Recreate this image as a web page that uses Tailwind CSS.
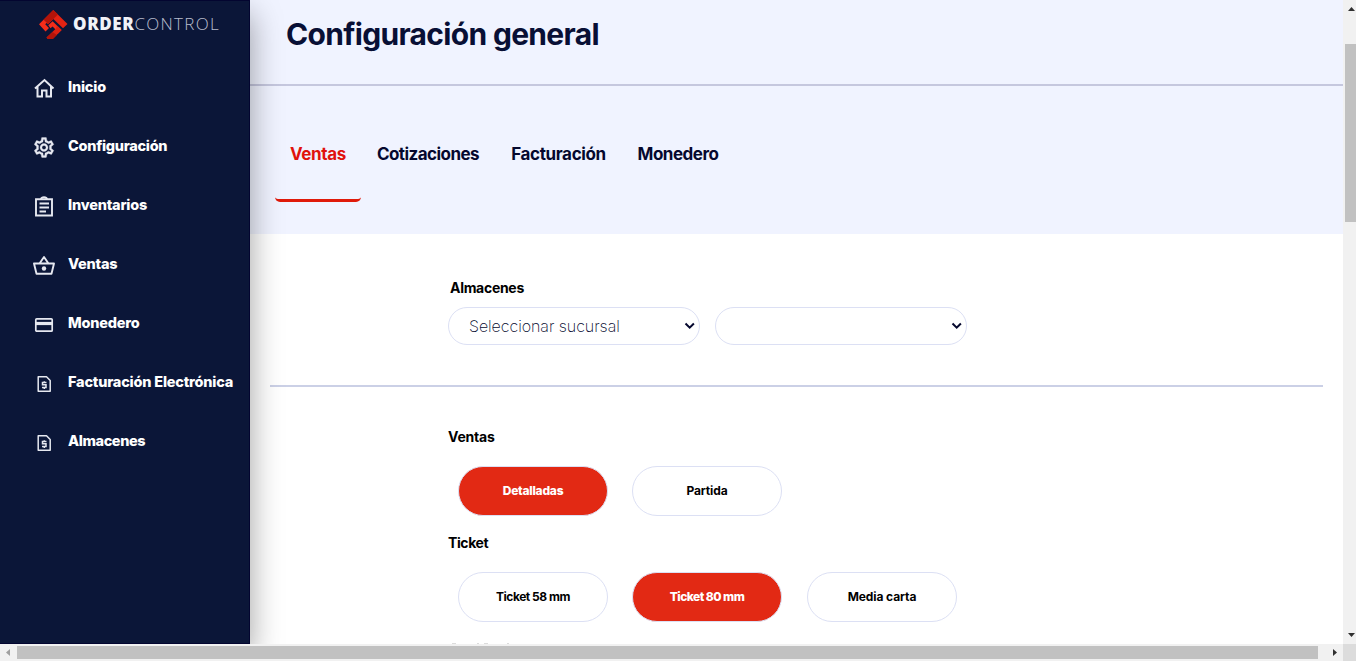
<!DOCTYPE html>
<html lang="es">
<head>
<meta charset="utf-8">
<title>Configuración general</title>
<script src="https://cdn.jsdelivr.net/npm/@tailwindcss/browser@4"></script>
</head>
<body class="h-[661px] w-[1356px] overflow-hidden bg-white font-['Inter',sans-serif] text-black">
<div class="flex h-[661px] flex-col">
  <div class="flex h-[644px]">
    <aside class="relative z-10 flex w-[250px] shrink-0 flex-col border-t border-r border-b border-[#030530] bg-[#0b1638] shadow-[0_14px_30px_0_rgba(0,0,0,0.38)]">
      <div class="flex h-[56px] shrink-0 items-start pt-[9px] pl-[39px]">
        <svg class="h-[30px] w-[29px]" viewBox="0 0 29 30">
          <path d="M14.300 0 L28.500 14 L24 18.300 L14.300 9 L9 14.300 L4.500 9.800 Z" fill="#e32313"/>
          <path d="M14.300 0 L19 4.600 L10 13.300 L9 14.300 L4.500 9.800 Z" fill="#b3140a"/>
          <path d="M4.500 9.800 L0 14.300 L6.500 21.500 L10 18 L6.200 14.300 L7.800 12.700 Z" fill="#f42d1a"/>
          <path d="M9.300 15.300 L13.600 11.200 L22.600 20 L18.500 24 L16 21.500 L17 20 L13.600 16.500 L11.500 18.300 Z" fill="#f42d1a"/>
          <path d="M18.300 15.800 L22.600 20 L13.800 29 H8.800 L7.500 27.500 L16.700 18.800 Z" fill="#dc2011"/>
          <path d="M13.500 22 L17.800 25 L13.800 29 H8.800 L7.500 27.500 Z" fill="#b3140a"/>
        </svg>
        <div class="ml-[5px] flex h-[27px] items-center font-['Open_Sans',sans-serif] text-[17px] leading-none text-[#f1f2f8]"><span class="font-extrabold tracking-[0.6px]">ORDER</span><span class="font-light tracking-[1.300px] text-[#b9bdcd]">CONTROL</span></div>
      </div>
      <nav class="flex flex-col text-[14.5px] font-extrabold tracking-[-0.2px] text-white">
        <a class="flex h-[59px] items-center gap-[13px] pl-[34px]"><svg class="mt-[3px] size-[21px]" viewBox="0.500 0 21 21" fill="none" stroke="#e6e8f0" stroke-width="2"><path d="M1.500 10.500 L11 2 L20 10.500 M4 8.500 V18.500 H8.500 V12.500 H13 V18.500 H17.500 V8.500"/></svg>Inicio</a>
        <a class="flex h-[59px] items-center gap-[13px] pl-[34px] tracking-[-0.280px]"><svg class="mt-[3px] size-[21px]" viewBox="2 1.500 21 21" fill="#e6e8f0" stroke="#e6e8f0" stroke-width=".3"><path d="M19.430 12.980c.04-.32.070-.64.070-.98s-.03-.66-.07-.98l2.110-1.650c.19-.15.240-.42.120-.64l-2-3.460c-.12-.22-.39-.3-.61-.22l-2.490 1c-.52-.4-1.080-.73-1.690-.98l-.38-2.650C14.460 2.180 14.250 2 14 2h-4c-.25 0-.46.18-.49.42l-.38 2.650c-.61.25-1.170.59-1.690.98l-2.490-1c-.23-.09-.49 0-.61.22l-2 3.460c-.13.22-.07.49.12.64l2.110 1.650c-.04.32-.07.65-.07.980s.03.66.070.98l-2.110 1.650c-.19.15-.24.42-.12.64l2 3.460c.12.22.39.3.61.22l2.490-1c.52.4 1.080.73 1.690.98l.38 2.650c.03.24.24.42.490.42h4c.25 0 .46-.18.490-.42l.38-2.650c.61-.25 1.170-.59 1.690-.98l2.490 1c.23.09.49 0 .61-.22l2-3.460c.12-.22.07-.49-.12-.64l-2.110-1.650zm-1.980-1.710c.04.31.050.520.050.730s-.02.430-.05.730l-.14 1.130.89.7 1.080.84-.7 1.210-1.270-.51-1.040-.42-.9.680c-.43.320-.84.560-1.250.730l-1.060.430-.16 1.130-.2 1.350h-1.400l-.19-1.350-.16-1.130-1.060-.43c-.43-.18-.83-.41-1.230-.71l-.91-.7-1.060.430-1.270.51-.7-1.210 1.080-.84.89-.7-.14-1.130c-.03-.31-.05-.54-.05-.74s.02-.43.050-.73l.14-1.130-.89-.7-1.080-.84.7-1.210 1.270.51 1.040.42.9-.68c.43-.32.84-.56 1.250-.73l1.060-.43.160-1.130.2-1.350h1.390l.19 1.350.16 1.130 1.060.43c.43.180.83.410 1.230.71l.91.7 1.060-.43 1.270-.51.7 1.210-1.070.85-.89.7.14 1.130zM12 8c-2.210 0-4 1.790-4 4s1.790 4 4 4 4-1.790 4-4-1.790-4-4-4zm0 6c-1.100 0-2-.9-2-2s.9-2 2-2 2 .9 2 2-.9 2-2 2z"/></svg>Configuración</a>
        <a class="flex h-[59px] items-center gap-[13px] pl-[34px]"><svg class="mt-[3px] size-[21px]" viewBox="1 0 21 21" fill="none" stroke="#e6e8f0" stroke-width="1.900"><path d="M3 3.300 H19 V19.500 H3 Z M6.500 7.500 H16 M6.500 11.500 H16 M6.500 15.500 H13"/><path d="M8 3.300 C8.500 .5 13.500 .5 14 3.300"/></svg>Inventarios</a>
        <a class="flex h-[59px] items-center gap-[13px] pl-[33px]"><svg class="mt-[3px] h-[21px] w-[22px]" viewBox="0 0 22 21" fill="none" stroke="#e6e8f0" stroke-width="1.900" stroke-linejoin="round"><path d="M1 8.500 H21 L18.500 18.800 H3.500 Z M6.500 8.500 L11 2 L15.500 8.500"/><circle cx="11" cy="13.500" r="2.200" fill="#e6e8f0" stroke="none"/></svg>Ventas</a>
        <a class="flex h-[59px] items-center gap-[13px] pl-[34px]"><svg class="mt-[3px] size-[21px]" viewBox="1 0 21 21" fill="none" stroke="#e6e8f0" stroke-width="1.700"><rect x="2.800" y="4.800" width="16.400" height="12.400" rx="1"/><path d="M3 9.500 H19" stroke-width="3.200"/></svg>Monedero</a>
        <a class="flex h-[59px] items-center gap-[13px] pl-[34px] whitespace-nowrap"><svg class="mt-[3px] size-[21px] shrink-0" viewBox="1 0 21 21" fill="none" stroke="#e6e8f0" stroke-width="1.500"><path d="M5.200 3.800 H13.500 L17.200 7.500 V18.200 H5.200 Z" stroke-linejoin="round"/><path d="M13.500 9.500 H9.500 V11.800 H13 V14.500 H9 M11.300 8.200 V9.500 M11.300 14.500 V16"/></svg>Facturación Electrónica</a>
        <a class="flex h-[60px] items-center gap-[13px] pl-[34px] tracking-[-0.400px]"><svg class="mt-[2px] size-[21px]" viewBox="1 0 21 21" fill="none" stroke="#e6e8f0" stroke-width="1.500"><path d="M5.200 3.800 H13.500 L17.200 7.500 V18.200 H5.200 Z" stroke-linejoin="round"/><path d="M13.500 9.500 H9.500 V11.800 H13 V14.500 H9 M11.300 8.200 V9.500 M11.300 14.500 V16"/></svg>Almacenes</a>
      </nav>
    </aside>

    <main class="flex w-[1093px] shrink-0 flex-col overflow-hidden">
      <header class="h-[86px] shrink-0 border-b-2 border-[#c5c7de] bg-[#f0f3ff] pt-[14px] pl-[36px]">
        <h1 class="text-[30px] leading-[40px] font-bold tracking-[-0.680px] text-[#080f35]">Configuración general</h1>
      </header>
      <div class="flex h-[148px] shrink-0 bg-[#f0f3ff] pt-[34px] pl-[25px] text-[17px] font-bold tracking-[-0.350px] text-[#05082e]">
        <div class="flex h-[82px] w-[86px] items-center justify-center rounded-[5px] border-b-3 border-[#e01a0a] pb-[10px] text-[#e0120c]">Ventas</div>
        <div class="flex h-[69px] w-[134px] items-center justify-center tracking-[-0.550px]">Cotizaciones</div>
        <div class="flex h-[69px] w-[127px] items-center justify-center">Facturación</div>
        <div class="flex h-[69px] w-[112px] items-center justify-center tracking-[-0.500px]">Monedero</div>
      </div>

      <section class="mx-5 h-[153px] shrink-0 border-b-2 border-[#cbd0e6] pt-[44px] pl-[178px]">
        <h2 class="pl-[2px] text-[14px] leading-5 font-bold tracking-[-0.300px]">Almacenes</h2>
        <div class="mt-[9px] flex gap-[15px]">
          <div class="flex h-[38px] w-[252px] items-center justify-between rounded-full border border-[#dce0f4] pr-[4px] pl-5 text-[16px] font-extralight tracking-[-0.050px] text-[#05082e]"><span>Seleccionar sucursal</span><svg class="h-[8px] w-[11px]" viewBox="0 0 11 8" fill="none" stroke="#05082e" stroke-width="2"><path d="M1.500 1.500 L5.700 5.700 L9.900 1.500"/></svg></div>
          <div class="flex h-[38px] w-[252px] items-center justify-end rounded-full border border-[#dce0f4] pr-[4px]"><svg class="h-[8px] w-[11px]" viewBox="0 0 11 8" fill="none" stroke="#05082e" stroke-width="2"><path d="M1.500 1.500 L5.700 5.700 L9.900 1.500"/></svg></div>
        </div>
      </section>

      <section class="flex h-[257px] shrink-0 flex-col overflow-hidden pt-[40px] pl-[198px]">
        <h2 class="text-[14px] leading-5 font-bold tracking-[-0.200px]">Ventas</h2>
        <div class="mt-[19px] ml-[10px] flex gap-6 text-[12px] font-bold tracking-[-0.100px]">
          <div class="flex h-[50px] w-[150px] items-center justify-center rounded-full border border-[#dce0f4] bg-[#e22914] font-extrabold tracking-[-0.250px] text-white">Detalladas</div>
          <div class="flex h-[50px] w-[150px] items-center justify-center rounded-full border border-[#dce0f4]">Partida</div>
        </div>
        <h2 class="mt-[17px] text-[14px] leading-5 font-bold tracking-[-0.400px]">Ticket</h2>
        <div class="mt-[19px] ml-[10px] flex text-[12px] font-bold">
          <div class="flex h-[50px] w-[150px] items-center justify-center rounded-full border border-[#dce0f4] tracking-[-0.480px]">Ticket 58 mm</div>
          <div class="ml-6 flex h-[50px] w-[150px] items-center justify-center rounded-full border border-[#dce0f4] bg-[#e22914] font-extrabold tracking-[-0.550px] text-white">Ticket 80 mm</div>
          <div class="ml-[25px] flex h-[50px] w-[150px] items-center justify-center rounded-full border border-[#dce0f4] tracking-[-0.100px]">Media carta</div>
        </div>
        <div class="mt-[21px] ml-[4px] flex h-px shrink-0 text-[#dcdcdc]"><i class="h-px w-[4px] bg-current"></i><i class="ml-[21px] h-px w-[2px] bg-current"></i><i class="ml-[5px] h-px w-[4px] bg-current"></i><i class="ml-[19px] h-px w-[2px] bg-current"></i></div>
      </section>
    </main>

    <div class="relative z-20 flex w-[13px] flex-col bg-[#f1f1f1] pl-[2px]">
      <svg class="mt-[7px] ml-[3px] h-[4px] w-[7px] shrink-0" viewBox="0 0 7 4"><path d="M0 4 L3.500 0 L7 4 Z" fill="#303030"/></svg>
      <div class="mt-[33px] h-[178px] bg-[#c1c1c1]"></div>
      <svg class="mt-auto mb-[7px] ml-[3px] h-[4px] w-[7px] shrink-0" viewBox="0 0 7 4"><path d="M0 0 L3.500 4 L7 0 Z" fill="#303030"/></svg>
    </div>
  </div>

  <div class="relative z-20 flex h-[17px] items-center bg-[#f1f1f1]">
    <svg class="ml-[6px] h-[7px] w-[4px]" viewBox="0 0 4 7"><path d="M4 0 L0 3.500 L4 7 Z" fill="#a0a0a0"/></svg>
    <div class="ml-[7px] h-[13px] w-[1301px] bg-[#c1c1c1]"></div>
    <svg class="ml-[15px] h-[7px] w-[4px]" viewBox="0 0 4 7"><path d="M0 0 L4 3.500 L0 7 Z" fill="#303030"/></svg>
    <div class="ml-auto h-full w-[13px] bg-[#dcdcdc]"></div>
  </div>
</div>
</body>
</html>
